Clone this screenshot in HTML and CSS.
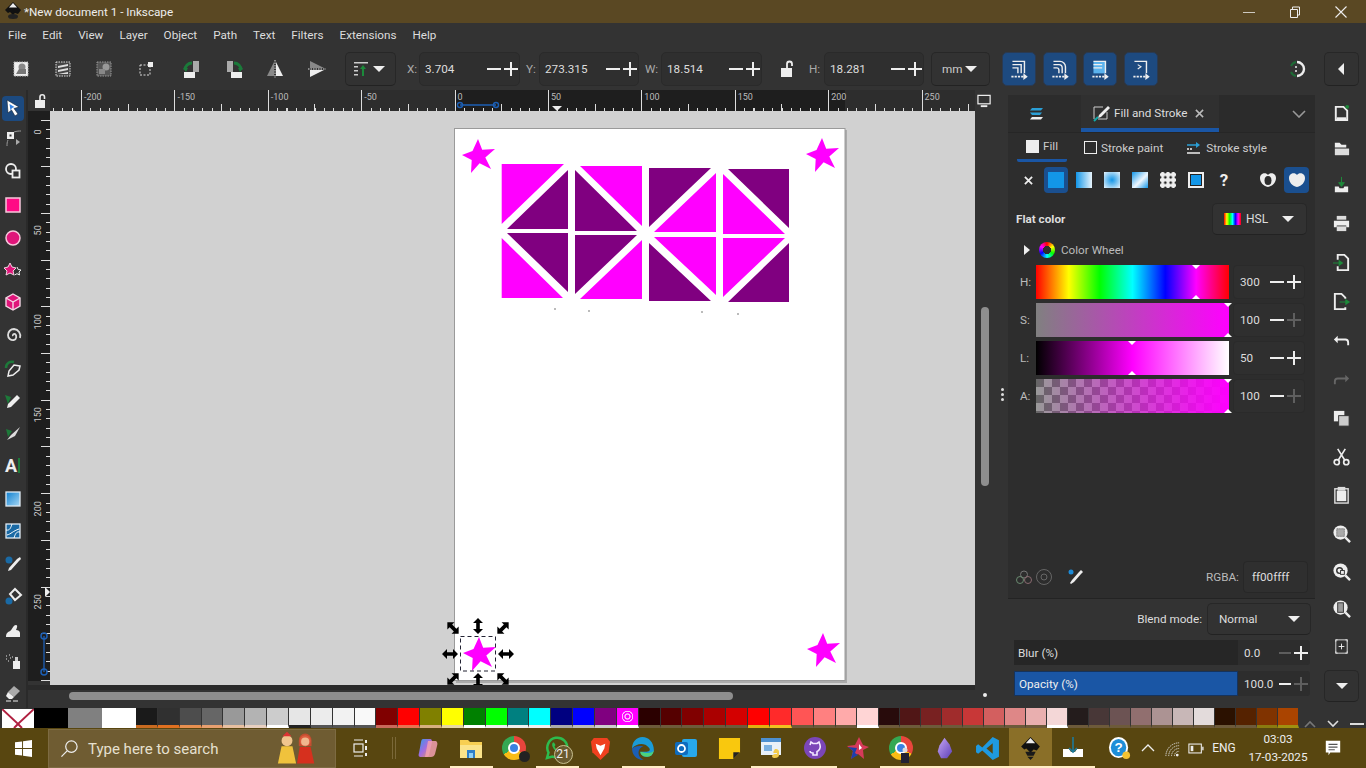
FILE: index.html
```html
<!DOCTYPE html>
<html lang="en">
<head>
<meta charset="utf-8">
<title>*New document 1 - Inkscape</title>
<link rel="stylesheet" href="styles.css">
</head>
<body>
<header class="title">
  <svg class="logo" viewBox="0 0 20 20" width="20" height="20"><path d="M10 1 2 9l3 3 2-1 3 3 2-2 3 1 3-4z" fill="#111"/><path d="M10 2 6 6.500h8z" fill="#eee"/><ellipse cx="10" cy="15.500" rx="5" ry="2.500" fill="#222"/></svg>
  <span class="title-text">*New document 1 - Inkscape</span>
  <div class="win">
    <svg viewBox="0 0 46 16" width="12" height="16"><rect x="0" y="8" width="46" height="3" fill="#eee"/></svg>
    <svg viewBox="0 0 12 12" width="12" height="12"><path d="M1.500 3.500h7v8h-7zM3.500 3.500v-2.500h7v8h-2" fill="none" stroke="#eee"/></svg>
    <svg viewBox="0 0 12 12" width="12" height="12"><path d="M.5.500l11 11M11.500.500l-11 11" stroke="#eee" stroke-width="1.100"/></svg>
  </div>
</header>

<nav class="menu">
  <span>File</span><span>Edit</span><span>View</span><span>Layer</span><span>Object</span><span>Path</span><span>Text</span><span>Filters</span><span>Extensions</span><span>Help</span>
</nav>

<div class="toolbar">
  <div class="ticons">
    <svg viewBox="0 0 24 24"><rect x="5" y="5" width="14" height="14" fill="#eee" stroke="#bbb" stroke-dasharray="1.500 1"/><circle cx="13" cy="10" r="3.500" fill="#888"/><path d="M7 17l3-5h7v5z" fill="#777"/></svg>
    <svg viewBox="0 0 24 24"><rect x="5" y="5" width="14" height="14" fill="#444" stroke="#ddd" stroke-dasharray="1.500 1"/><path d="M7 9l10-2v2L7 11zM7 13l10-2v2L7 15zM7 17l10-2v2H7z" fill="#ddd"/></svg>
    <svg viewBox="0 0 24 24"><rect x="5" y="5" width="14" height="14" fill="#555" stroke="#999" stroke-dasharray="1.500 1"/><circle cx="14" cy="10" r="3.500" fill="#999"/><rect x="7" y="12" width="6" height="5" fill="#888"/></svg>
    <svg viewBox="0 0 24 24"><rect x="6" y="8" width="10" height="10" fill="none" stroke="#ddd" stroke-dasharray="2 1.500"/><rect x="14" y="5" width="5" height="5" fill="#eee"/></svg>
    <svg viewBox="0 0 24 24" class="sep"><rect x="13" y="4" width="6" height="11" fill="#aaa"/><rect x="4" y="15" width="11" height="6" fill="#eee"/><path d="M5 13a7 7 0 0 1 7-7" fill="none" stroke="#1b7a3a" stroke-width="3"/><path d="M3 11l5 0-2 4z" fill="#1b7a3a"/></svg>
    <svg viewBox="0 0 24 24"><rect x="5" y="4" width="6" height="11" fill="#aaa"/><rect x="9" y="15" width="11" height="6" fill="#eee"/><path d="M19 13a7 7 0 0 0-7-7" fill="none" stroke="#1b7a3a" stroke-width="3"/><path d="M21 11h-5l2 4z" fill="#1b7a3a"/></svg>
    <svg viewBox="0 0 24 24"><path d="M11 5v14H4z" fill="#888"/><path d="M13 5v14h7z" fill="#eee"/><path d="M12 3v18" stroke="#ddd" stroke-dasharray="1.500 1"/></svg>
    <svg viewBox="0 0 24 24"><path d="M5 11h14L5 4z" fill="#888"/><path d="M5 13h14L5 20z" fill="#eee"/><path d="M3 12h18" stroke="#ddd" stroke-dasharray="1.500 1"/></svg>
  </div>
  <div class="btn align">
    <svg viewBox="0 0 18 18" width="18" height="18"><path d="M1 2h14v1.500H1zM1 6h4v1.500H1zM1 10h4v1.500H1zM1 14h4v1.500H1z" fill="#ccc"/><path d="M10 5l3 4h-2v7H9V9H7z" fill="#1b8a3a"/></svg>
    <i class="caret"></i>
  </div>
  <label class="flabel fx">X:</label>
  <div class="field fw1"><span>3.704</span><i class="minus"></i><i class="plus"></i></div>
  <label class="flabel fy">Y:</label>
  <div class="field fw2"><span>273.315</span><i class="minus"></i><i class="plus"></i></div>
  <label class="flabel fw">W:</label>
  <div class="field fw1"><span>18.514</span><i class="minus"></i><i class="plus"></i></div>
  <svg class="lock" viewBox="0 0 14 18" width="14" height="18"><rect x="1" y="8" width="11" height="9" fill="#eee"/><path d="M7 8V4a2.500 2.500 0 0 1 5 0v2" fill="none" stroke="#eee" stroke-width="1.800"/></svg>
  <label class="flabel fh">H:</label>
  <div class="field fw2"><span>18.281</span><i class="minus"></i><i class="plus"></i></div>
  <div class="btn unit"><span>mm</span><i class="caret"></i></div>
  <div class="snaps">
    <div class="bluebtn"><svg viewBox="0 0 22 22"><path d="M5 4h11v11M5 7h8v8M5 10h5v5" fill="none" stroke="#eee" stroke-width="1.300"/><path d="M4 18h11" stroke="#eee" stroke-dasharray="2 1" stroke-width="1.500"/><path d="M15 15l4 3-4 3z" fill="#eee"/></svg></div>
    <div class="bluebtn"><svg viewBox="0 0 22 22"><path d="M5 4h6a5 5 0 0 1 5 5v6M5 7h5a3 3 0 0 1 3 3v5M5 10h3a2 2 0 0 1 2 2v3" fill="none" stroke="#eee" stroke-width="1.300"/><path d="M4 18h11" stroke="#eee" stroke-dasharray="2 1" stroke-width="1.500"/><path d="M15 15l4 3-4 3z" fill="#eee"/></svg></div>
    <div class="bluebtn"><svg viewBox="0 0 22 22"><rect x="5" y="4" width="11" height="11" fill="#5bb3ee"/><path d="M5 4h11v11M5 7h8M5 10h8" fill="none" stroke="#eee" stroke-width="1.300"/><path d="M4 18h11" stroke="#eee" stroke-dasharray="2 1" stroke-width="1.500"/><path d="M15 15l4 3-4 3z" fill="#eee"/></svg></div>
    <div class="bluebtn"><svg viewBox="0 0 22 22"><path d="M5 4h11v11" fill="none" stroke="#eee" stroke-width="1.300"/><path d="M8 7l3 2-3 2" fill="none" stroke="#eee"/><path d="M4 18h11" stroke="#eee" stroke-dasharray="2 1" stroke-width="1.500"/><path d="M15 15l4 3-4 3z" fill="#eee"/></svg></div>
  </div>
  <svg class="snapmain" viewBox="0 0 22 22" width="22" height="22"><path d="M9 4a7 7 0 0 1 0 14" fill="none" stroke="#eee" stroke-width="2.400"/><path d="M8 4a7 7 0 0 0-5 4M3 14a7 7 0 0 0 5 4" fill="none" stroke="#1d6b35" stroke-width="2"/><path d="M7 9h2M7 13h2" stroke="#eee" stroke-width="1.500"/></svg>
  <div class="btn more"><i class="caret-left"></i></div>
</div>

<main class="main">
  <aside class="tools">
    <div class="tool on"><svg viewBox="0 0 20 20"><path d="M4 2l12 7-5 1.500 4 5.500-3 2-3.500-6L5 15z" fill="#fff" stroke="#123" stroke-width=".6"/><path d="M6.500 6l5 3-2.500 1-1.500 2.500z" fill="#3584e4"/></svg></div>
    <div class="tool"><svg viewBox="0 0 20 20"><rect x="4" y="4" width="7" height="7" fill="#eee"/><rect x="6.500" y="6.500" width="2" height="2" fill="#333"/><path d="M13 11l4 3-4 3z" fill="#aaa"/><path d="M11 4c3-1 5-1 7-1M5 12c-1 2-1 4-1 6" stroke="#999" fill="none"/></svg></div>
    <div class="tool"><svg viewBox="0 0 20 20"><circle cx="8" cy="8" r="5" fill="none" stroke="#eee" stroke-width="1.800"/><rect x="9.500" y="9.500" width="7" height="7" fill="#333" stroke="#eee" stroke-width="1.800"/></svg></div>
    <div class="tool"><svg viewBox="0 0 20 20"><rect x="3" y="3" width="14" height="14" fill="#ff0a85" stroke="#f7c8dc" stroke-width="1.500"/></svg></div>
    <div class="tool"><svg viewBox="0 0 20 20"><circle cx="10" cy="10" r="7" fill="#e0157a" stroke="#f7c8dc" stroke-width="1.500"/></svg></div>
    <div class="tool"><svg viewBox="0 0 20 20"><path d="M7 3l2 4 4 1-3 3 1 4-4-2-4 2 1-4-3-3 4-1z" fill="#e0157a" stroke="#f3d5e3"/><path d="M14 7l1.200 2.500 2.800.5-2 2 .5 3-2.500-1.300-2.500 1.300" fill="#333" stroke="#eee"/></svg></div>
    <div class="tool"><svg viewBox="0 0 20 20"><path d="M10 2l7 4v8l-7 4-7-4V6z" fill="#e0157a" stroke="#f3d5e3" stroke-width="1.400"/><path d="M3 6l7 4 7-4M10 10v8" stroke="#f3d5e3" stroke-width="1.400" fill="none"/></svg></div>
    <div class="tool"><svg viewBox="0 0 20 20"><path d="M10 11a1.500 1.500 0 0 1 2-2 3.500 3.500 0 0 1-1 6 5 5 0 0 1-6-5 6 6 0 0 1 6-6 7 7 0 0 1 6 9" fill="none" stroke="#ddd" stroke-width="1.800"/></svg></div>
    <div class="tool"><svg viewBox="0 0 20 20"><path d="M3 10c0-5 4-7 8-6" fill="none" stroke="#1d7a3a" stroke-width="2.500"/><path d="M17 8l-6-1-5 6-1 5 5-1 6-5z" fill="#333" stroke="#eee" stroke-width="1.500"/></svg></div>
    <div class="tool"><svg viewBox="0 0 20 20"><path d="M2 4l6 2-3 7z" fill="#1d7a3a"/><path d="M4 17l1-4 9-9 3 3-9 9z" fill="#eee"/></svg></div>
    <div class="tool"><svg viewBox="0 0 20 20"><path d="M3 6l6 2-4 6z" fill="#1d7a3a"/><path d="M4 17l4-5 9-8-5 9z" fill="#ddd"/></svg></div>
    <div class="tool"><span class="tool-a">A</span><i class="tool-bar"></i></div>
    <div class="tool"><svg viewBox="0 0 20 20"><defs><linearGradient id="gtool" x1="0" y1="0" x2="1" y2="1"><stop offset="0" stop-color="#0d7fd0"/><stop offset="1" stop-color="#a8d8f5"/></linearGradient></defs><rect x="3" y="3" width="14" height="14" fill="url(#gtool)" stroke="#dfeaf3" stroke-width="1.300"/></svg></div>
    <div class="tool"><svg viewBox="0 0 20 20"><rect x="3" y="3" width="14" height="14" fill="#1a6aa5" stroke="#dfeaf3" stroke-width="1.300"/><path d="M3 9c4 1 5-3 6-6M17 11c-4-1-5 3-6 6M4 14c4-1 6-4 12-6" stroke="#fff" fill="none"/></svg></div>
    <div class="tool"><svg viewBox="0 0 20 20"><circle cx="6" cy="6" r="3.500" fill="#1a6aa5"/><path d="M17 3l1 2-2 2-8 9-3 1 1-3 8-9z" fill="#eee"/></svg></div>
    <div class="tool"><svg viewBox="0 0 20 20"><path d="M12 3l6 6-6 5-5-6z" fill="#333" stroke="#eee" stroke-width="2"/><circle cx="6" cy="15" r="3.500" fill="#1a6aa5"/></svg></div>
    <div class="tool"><svg viewBox="0 0 20 20"><path d="M3 17c0-4 2-5 4-6 2-1 3-6 6-6 2 0 1 3 0 5 2 0 4 1 4 3v4z" fill="#eee"/></svg></div>
    <div class="tool"><svg viewBox="0 0 20 20"><path d="M10 9h7v8h-7z" fill="#eee"/><rect x="12" y="5" width="3" height="4" fill="#ccc"/><path d="M3 4h1M6 3h1M3 7h1M7 6h1M5 9h1M9 5h1" stroke="#aaa" stroke-width="1.500"/></svg></div>
    <div class="tool"><svg viewBox="0 0 20 20"><path d="M11 3l6 5-6 6-6-5z" fill="#aaa"/><path d="M5 9l6 5-2 2H6l-3-3z" fill="#eee"/><path d="M3 18h14" stroke="#eee" stroke-dasharray="5 2"/></svg></div>
  </aside>

  <section class="work">
    <div class="corner"><svg viewBox="0 0 14 16" width="14" height="16"><rect x="1" y="7" width="10" height="8" fill="#eee"/><path d="M6 7V4a2.200 2.200 0 0 1 4.500 0v2" fill="none" stroke="#eee" stroke-width="1.600"/></svg></div>
    <div class="hruler">
      <span>-200</span><span>-150</span><span>-100</span><span>-50</span><span>0</span><span>50</span><span>100</span><span>150</span><span>200</span><span>250</span>
      <svg class="hmark" viewBox="0 0 48 10"><path d="M5 5h36" stroke="#1c5fb5" stroke-width="1.500"/><circle cx="5" cy="5" r="2.500" fill="none" stroke="#1c5fb5" stroke-width="1.400"/><circle cx="41" cy="5" r="2.500" fill="none" stroke="#1c5fb5" stroke-width="1.400"/></svg>
      <i class="hptr"></i>
    </div>
    <div class="rulercorner"><svg viewBox="0 0 16 14" width="15" height="14"><rect x="1" y="1" width="13" height="9" fill="none" stroke="#eee" stroke-width="1.300"/><path d="M4 12.500h7" stroke="#eee" stroke-width="2"/></svg></div>
    <div class="vruler">
      <span>0</span><span>50</span><span>100</span><span>150</span><span>200</span><span>250</span>
      <svg class="vmark" viewBox="0 0 10 48"><path d="M5 5v36" stroke="#1c5fb5" stroke-width="1.300"/><circle cx="5" cy="5" r="3" fill="none" stroke="#1c5fb5" stroke-width="1.500"/><circle cx="5" cy="41" r="3" fill="none" stroke="#1c5fb5" stroke-width="1.500"/></svg>
      <i class="vptr"></i>
    </div>
    <div class="canvas">
      <svg viewBox="50 111 925 574" width="925" height="574">
        <defs>
          <polygon id="star" points="0,-17 4.200,-6.200 17,-7 7.300,1.500 13,13 1.600,7.300 -7,17 -6.300,4.100 -16,-1 -5.500,-5.100" fill="#ff00ff"/>
          <path id="dbl" d="M-8 0-3-5V-1.800H3V-5L8 0 3 5V1.800H-3V5Z" fill="#000"/>
        </defs>
        <rect x="456" y="130" width="391" height="553" fill="#aaa"/>
        <rect x="454.500" y="128.500" width="390.500" height="552" fill="#fff" stroke="#9a9a9a"/>
        <use href="#star" x="478" y="156"/><use href="#star" x="822" y="155"/><use href="#star" x="823" y="650"/>
        <g fill="#ff00ff">
          <path d="M501.700 164H564L501.700 224ZM642 166H580L642 226ZM716 173V232H654ZM723 174V234H785Z"/>
          <path d="M501.700 238V298H563ZM642 240V299H580ZM654 237H716V295ZM723 238H785L723 297Z"/>
        </g>
        <g fill="#800080">
          <path d="M568 170V229H507ZM575 170V231H637ZM649 168H711L649 227ZM728 169H789V228Z"/>
          <path d="M507 233H568V292ZM575 235H637L575 294ZM649 243V301H711ZM789 243V302H728Z"/>
        </g>
        <g fill="#bbb"><rect x="554" y="308" width="2" height="2"/><rect x="588" y="310" width="2" height="2"/><rect x="701" y="311" width="2" height="2"/><rect x="737" y="313" width="2" height="2"/></g>
        <use href="#star" x="479" y="654"/>
        <rect x="460.500" y="636.500" width="35" height="34.500" fill="none" stroke="#223" stroke-dasharray="4 3"/>
        <use href="#dbl" transform="translate(450 654)"/><use href="#dbl" transform="translate(506 654)"/>
        <use href="#dbl" transform="translate(478 626) rotate(90)"/><use href="#dbl" transform="translate(478 681) rotate(90)"/>
        <use href="#dbl" transform="translate(453 628) rotate(45)"/><use href="#dbl" transform="translate(503 628) rotate(-45)"/>
        <use href="#dbl" transform="translate(453 679) rotate(-45)"/><use href="#dbl" transform="translate(503 679) rotate(45)"/>
      </svg>
    </div>
    <div class="vscroll"><i></i></div>
    <div class="hscroll"><i></i></div>
    <div class="scorner"><i></i></div>
  </section>

  <div class="handle"><i></i><i></i><i></i></div>

  <section class="panel">
    <div class="tabs">
      <div class="tab-first"><svg viewBox="0 0 20 16" width="20" height="16"><path d="M5 2h11l-2 2.500H3z" fill="#2a9fd6"/><path d="M3 6.500h12l-2 2.500H5z" fill="#2a9fd6"/><path d="M5 11h11l-2 2.500H3z" fill="#eee"/></svg></div>
      <div class="tab-active">
        <svg viewBox="0 0 18 18" width="18" height="18"><path d="M2 15V3h9M15 8v7H6" fill="none" stroke="#ccc"/><path d="M16 2 7 11l-1 3 3-1 9-9z" fill="#eee"/><path d="M6 13 2 17" stroke="#1aa" stroke-width="2"/></svg>
        <span>Fill and Stroke</span>
        <svg viewBox="0 0 10 10" width="9" height="9"><path d="M1 1l8 8M9 1l-8 8" stroke="#bbb" stroke-width="1.700"/></svg>
      </div>
      <div class="tab-menu"><svg viewBox="0 0 14 8" width="14" height="8"><path d="M1 1l6 6 6-6" fill="none" stroke="#999" stroke-width="1.600"/></svg></div>
    </div>
    <div class="fill-panel">
      <div class="subtabs">
        <div class="subtab current"><i class="sq filled"></i><span>Fill</span></div>
        <div class="subtab"><i class="sq"></i><span>Stroke paint</span></div>
        <div class="subtab"><svg viewBox="0 0 16 14" width="16" height="14"><path d="M1 4h9" stroke="#2a9fd6" stroke-width="1.500"/><path d="M10 1l4 3-4 3z" fill="#2a9fd6"/><path d="M1 8h5" stroke="#eee" stroke-dasharray="2 1" stroke-width="1.500"/><path d="M1 12h13" stroke="#eee" stroke-width="1.500"/></svg><span>Stroke style</span></div>
      </div>
      <div class="paints">
        <div class="paint"><svg viewBox="0 0 10 10" width="9" height="9"><path d="M1 1l8 8M9 1l-8 8" stroke="#eee" stroke-width="2"/></svg></div>
        <div class="paint sel"><i class="swatch flat"></i></div>
        <div class="paint"><i class="swatch lin"></i></div>
        <div class="paint"><i class="swatch rad"></i></div>
        <div class="paint"><i class="swatch mesh"></i></div>
        <div class="paint"><i class="swatch pat"></i></div>
        <div class="paint"><i class="swatch sw"></i></div>
        <div class="paint q">?</div>
        <div class="paint rule r1"><svg viewBox="0 0 18 16" width="18" height="16"><path d="M9 3C7 0 1 1 1 6c0 4 3 8 8 9 5-1 8-5 8-9 0-5-6-6-8-3z" fill="#eee"/><ellipse cx="9" cy="8.500" rx="3.500" ry="4.500" fill="#2d2d2d"/></svg></div>
        <div class="paint rule sel"><svg viewBox="0 0 18 16" width="18" height="16"><path d="M9 3C7 0 1 1 1 6c0 4 3 8 8 9 5-1 8-5 8-9 0-5-6-6-8-3z" fill="#eee"/></svg></div>
      </div>
      <div class="flatrow">
        <span class="flat-label">Flat color</span>
        <div class="btn hsl"><i class="rainbow"></i><span>HSL</span><i class="caret"></i></div>
      </div>
      <div class="wheelrow"><i class="tri"></i><i class="wheel"></i><span>Color Wheel</span></div>
      <div class="sl"><label>H:</label><div class="track hue"><i class="mk top mh"></i><i class="mk bot mh"></i></div><div class="sfield"><span>300</span><i class="minus"></i><i class="plus"></i></div></div>
      <div class="sl"><label>S:</label><div class="track sat"><i class="mk top mend"></i><i class="mk bot mend"></i></div><div class="sfield"><span>100</span><i class="minus"></i><i class="plus dim"></i></div></div>
      <div class="sl"><label>L:</label><div class="track lig"><i class="mk top ml"></i><i class="mk bot ml"></i></div><div class="sfield"><span>50</span><i class="minus"></i><i class="plus"></i></div></div>
      <div class="sl"><label>A:</label><div class="track alp"><i class="mk top mend"></i><i class="mk bot mend"></i></div><div class="sfield"><span>100</span><i class="minus"></i><i class="plus dim"></i></div></div>
      <div class="colorfoot">
        <svg viewBox="0 0 18 16" width="18" height="16"><g fill="none" stroke-width="1"><circle cx="9" cy="5.500" r="3.500" stroke="#777"/><circle cx="5" cy="11" r="3.500" stroke="#6a8a70"/><circle cx="13" cy="11" r="3.500" stroke="#8a6a70"/></g></svg>
        <svg class="cf2" viewBox="0 0 18 18" width="18" height="18"><circle cx="9" cy="9" r="7.500" fill="none" stroke="#666"/><circle cx="9" cy="9" r="3" fill="none" stroke="#666"/></svg>
        <svg class="cf3" viewBox="0 0 18 18" width="18" height="18"><circle cx="5" cy="4" r="2.500" fill="#1c8ad6"/><path d="M15 2l2 2-2 2-7 8-3 2-1-1 2-3 7-8z" fill="#eee"/></svg>
        <label class="rgba-l">RGBA:</label>
        <div class="rgba">ff00ffff</div>
      </div>
    </div>
    <div class="blend"><label>Blend mode:</label><div class="btn normal"><span>Normal</span><i class="caret"></i></div></div>
    <div class="bar"><div class="track-b"><span>Blur (%)</span></div><b>0.0</b><i class="minus dim"></i><i class="plus"></i></div>
    <div class="bar"><div class="track-b blue"><span>Opacity (%)</span></div><b>100.0</b><i class="minus"></i><i class="plus dim"></i></div>
  </section>

  <aside class="cmds">
    <div class="cmd"><svg viewBox="0 0 20 20"><path d="M4 3h8l4 4v10H4z" fill="none" stroke="#eee" stroke-width="2"/><rect x="5" y="14" width="10" height="3" fill="#eee"/><circle cx="16" cy="3" r="2" fill="#1d8a3a"/></svg></div>
    <div class="cmd"><svg viewBox="0 0 20 20"><path d="M3 3h5l2 2h5v3H3z" fill="#eee"/><path d="M3 9h15v7H3z" fill="#ddd"/></svg></div>
    <div class="cmd"><svg viewBox="0 0 20 20"><path d="M10 1v6h3l-3 4-3-4h3z" fill="#1d8a3a" stroke="#1d8a3a"/><path d="M3 11h4l1 2h4l1-2h4v6H3z" fill="#eee"/></svg></div>
    <div class="cmd"><svg viewBox="0 0 20 20"><path d="M5 2h10v4H5z" fill="#ddd"/><path d="M2 7h16v7h-3v-2H5v2H2z" fill="#eee"/><rect x="5" y="13" width="10" height="5" fill="#ddd"/></svg></div>
    <div class="cmd"><svg viewBox="0 0 20 20"><path d="M6 7V2h7l4 4v12H6v-4" fill="none" stroke="#eee" stroke-width="2"/><path d="M1 10h6V7l5 3.500L7 14v-3H1z" fill="#1d8a3a"/></svg></div>
    <div class="cmd"><svg viewBox="0 0 20 20"><path d="M14 7V6l-4-4H3v16h11v-2" fill="none" stroke="#eee" stroke-width="2"/><path d="M8 10h6V7l5 3.500-5 3.500v-3H8z" fill="#1d8a3a"/></svg></div>
    <div class="cmd"><svg viewBox="0 0 20 20"><path d="M6 5 2 9l4 4V10h8a2 2 0 0 1 2 2v3h2v-3a4 4 0 0 0-4-4H6z" fill="#eee"/></svg></div>
    <div class="cmd"><svg viewBox="0 0 20 20"><path d="M14 5l4 4-4 4V10H6a2 2 0 0 0-2 2v3H2v-3a4 4 0 0 1 4-4h8z" fill="#666"/></svg></div>
    <div class="cmd"><svg viewBox="0 0 20 20"><rect x="2" y="2" width="11" height="11" fill="#eee"/><rect x="7" y="7" width="11" height="11" fill="#ccc" stroke="#333"/></svg></div>
    <div class="cmd"><svg viewBox="0 0 20 20"><circle cx="5" cy="16" r="2.700" fill="none" stroke="#eee" stroke-width="1.800"/><circle cx="15" cy="16" r="2.700" fill="none" stroke="#eee" stroke-width="1.800"/><path d="M6.500 14 14 2M13.500 14 6 2" stroke="#eee" stroke-width="1.700"/></svg></div>
    <div class="cmd"><svg viewBox="0 0 20 20"><rect x="3" y="4" width="14" height="15" fill="none" stroke="#ddd" stroke-width="1.500"/><rect x="6" y="2" width="8" height="4" fill="#ddd"/><rect x="5" y="6" width="10" height="11" fill="#eee"/></svg></div>
    <div class="cmd"><svg viewBox="0 0 20 20"><circle cx="9" cy="9" r="7.500" fill="#eee"/><rect x="5" y="5" width="8" height="8" fill="#aaa" stroke="#555" stroke-dasharray="1 1"/><path d="M14 14l5 5" stroke="#eee" stroke-width="2.500"/></svg></div>
    <div class="cmd"><svg viewBox="0 0 20 20"><circle cx="9" cy="9" r="7.500" fill="#eee"/><circle cx="8" cy="9" r="3" fill="none" stroke="#333" stroke-width="1.500"/><rect x="9" y="9" width="4" height="4" fill="#eee" stroke="#333"/><path d="M14 14l5 5" stroke="#eee" stroke-width="2.500"/></svg></div>
    <div class="cmd"><svg viewBox="0 0 20 20"><circle cx="9" cy="9" r="7.500" fill="#eee"/><rect x="6" y="4" width="6" height="10" fill="#999" stroke="#333"/><path d="M14 14l5 5" stroke="#eee" stroke-width="2.500"/></svg></div>
    <div class="cmd"><svg viewBox="0 0 20 20"><path d="M4 5V3h2M14 3h2v2M16 15v2h-2M6 17H4v-2" fill="none" stroke="#ddd"/><rect x="4" y="3" width="12" height="14" fill="none" stroke="#ddd" stroke-width="1"/><path d="M10 7v6M7 10h6" stroke="#eee"/></svg></div>
    <div class="cmd"><div class="btn cmore"><i class="caret"></i></div></div>
  </aside>
</main>

<div class="palette">
  <div class="none"><svg viewBox="0 0 32 19" preserveAspectRatio="none" width="32" height="19"><path d="M0 0 16 15 32 0M16 15 12 19M16 15l4 4" fill="none" stroke="#b02040" stroke-width="2"/></svg></div>
  <i class="c big c000"></i><i class="c big c808"></i><i class="c big cfff"></i>
  <div class="pgroup g1">
    <i class="c g01"></i><i class="c g02"></i><i class="c g03"></i><i class="c g04"></i><i class="c g05"></i><i class="c g06"></i><i class="c g07"></i><i class="c g08"></i><i class="c g09"></i><i class="c g10"></i><i class="c g11"></i>
    <i class="c b01"></i><i class="c b02"></i><i class="c b03"></i><i class="c b04"></i><i class="c b05"></i><i class="c b06"></i><i class="c b07"></i><i class="c b08"></i><i class="c b09"></i><i class="c b10"></i><i class="c b11"></i><i class="c b12"></i>
    <i class="c r01"></i><i class="c r02"></i><i class="c r03"></i><i class="c r04"></i><i class="c r05"></i><i class="c r06"></i><i class="c r07"></i><i class="c r08"></i><i class="c r09"></i><i class="c r10"></i><i class="c r11"></i>
  </div>
  <div class="pgroup g2">
    <i class="c p01"></i><i class="c p02"></i><i class="c p03"></i><i class="c p04"></i><i class="c p05"></i><i class="c p06"></i><i class="c p07"></i><i class="c p08"></i><i class="c p09"></i>
    <i class="c m01"></i><i class="c m02"></i><i class="c m03"></i><i class="c m04"></i><i class="c m05"></i><i class="c m06"></i><i class="c m07"></i>
    <i class="c o01"></i><i class="c o02"></i><i class="c o03"></i><i class="c o04"></i>
  </div>
  <div class="pctrl">
    <svg viewBox="0 0 12 8" width="12" height="8"><path d="M1 7l5-5 5 5" fill="none" stroke="#777" stroke-width="1.600"/></svg>
    <svg viewBox="0 0 12 8" width="12" height="8"><path d="M1 1l5 5 5-5" fill="none" stroke="#ddd" stroke-width="1.600"/></svg>
    <svg viewBox="0 0 14 8" width="14" height="8"><path d="M0 4h14" stroke="#ddd" stroke-width="2"/></svg>
  </div>
</div>

<footer class="taskbar">
  <div class="start"><svg viewBox="0 0 18 18" width="17" height="17"><path d="M0 2.500 7.500 1.500V8.500H0ZM8.500 1.300 18 0V8.500H8.500ZM0 9.500H7.500V16.500L0 15.500ZM8.500 9.500H18V18L8.500 16.700Z" fill="#fff"/></svg></div>
  <div class="search">
    <svg viewBox="0 0 20 20" width="19" height="19"><circle cx="12" cy="8" r="6" fill="none" stroke="#eee" stroke-width="1.300"/><path d="M7.500 12.500 1.500 18.500" stroke="#eee" stroke-width="1.300"/></svg>
    <span>Type here to search</span>
    <svg class="dolls" viewBox="0 0 44 40" width="40" height="38"><circle cx="11" cy="12" r="6" fill="#f0c58e"/><path d="M6 7l5-5 5 5z" fill="#d33"/><path d="M5 18h12l4 19H1z" fill="#f0c23c"/><circle cx="31" cy="12" r="6" fill="#e8a878"/><path d="M24 12a7 8 0 0 1 14 0v6H24z" fill="#d84a30" opacity=".8"/><circle cx="31" cy="13" r="4.500" fill="#f0b88e"/><path d="M25 19h12l4 18H22z" fill="#d6301e"/></svg>
  </div>
  <div class="ti taskview"><svg viewBox="0 0 18 18" width="18" height="18"><path d="M3 1h9M3 17h9" stroke="#eee" stroke-width="1.200"/><rect x="3" y="5" width="9" height="8" fill="none" stroke="#eee" stroke-width="1.200"/><path d="M15 1v3M15 7v4M15 14v3" stroke="#eee" stroke-width="2"/></svg></div>
  <div class="tdiv"><i></i><i></i></div>
  <div class="ti"><svg viewBox="0 0 24 24" width="24" height="24"><defs><linearGradient id="cop" x1="0" y1="0" x2="1" y2="1"><stop offset="0" stop-color="#2f9be8"/><stop offset=".5" stop-color="#a56be0"/><stop offset="1" stop-color="#f0a040"/></linearGradient></defs><path d="M7 3h7c2 0 2 2 2 3l-3 13c-.5 2-2 2-3 2H5c-2 0-3-1-2-4L5 6c.4-2 1-3 2-3z" fill="url(#cop)"/><path d="M12 5h7c2 0 3 2 2 5l-2 8c-.6 2-2 3-4 3h-6z" fill="#f3a0b0" opacity=".85"/></svg></div>
  <div class="ti run"><svg viewBox="0 0 24 24" width="24" height="24"><path d="M1 4h8l2 2h12v16H1z" fill="#f7cf52"/><path d="M1 9h22v13H1z" fill="#fbe48a"/><path d="M8 14h8v8H8z" fill="#2e7fc8"/><rect x="10" y="17" width="4" height="5" fill="#8fd0f5"/></svg></div>
  <div class="ti"><i class="chrome"><i></i></i><i class="chrome-badge"></i></div>
  <div class="ti run"><svg viewBox="0 0 26 26" width="26" height="26"><path d="M3 23l1.500-5.500A10 10 0 1 1 8.500 21.500z" fill="none" stroke="#2dbb4e" stroke-width="2.500"/><path d="M9 7.500c-2 2 0 6 2.500 8s5 3 6.500 1l-2.500-2.500-1.500 1c-1.500-.5-3-2-3.500-3.500l1-1.500L10 7.500z" fill="#2dbb4e"/></svg><span class="wabadge">21</span></div>
  <div class="ti"><svg viewBox="0 0 22 26" width="21" height="25"><path d="M4 2h14l3 4-1.500 11L11 25 2.500 17 1 6z" fill="#f0401f"/><path d="M6 8l5 2 5-2-1 5-4 7-4-7z" fill="#fff"/></svg></div>
  <div class="ti run"><svg viewBox="0 0 24 24" width="25" height="25"><path d="M22 14C22 6 17 1 11 1 5 1 1 6 1 12c4-5 12-6 16-1 2 2 1 4-2 4H9c0 3 3 5 7 5 3 0 5-2 6-6z" fill="#1a9bd7"/><path d="M1 12c0 6 4 11 11 11-4-2-6-6-4-10 1-2 3-3 4-3-5-1-9 0-11 2z" fill="#1b5fb5"/><path d="M9 15c0 3 3 5 7 5 3 0 5-2 6-6-2 3-7 3-13 1z" fill="#4dd27a"/></svg></div>
  <div class="ti"><svg viewBox="0 0 24 24" width="24" height="24"><rect x="8" y="3" width="15" height="18" rx="2" fill="#28a8ea"/><rect x="1" y="6" width="13" height="13" rx="2" fill="#0f6cbd"/><circle cx="7.500" cy="12.500" r="3.500" fill="none" stroke="#fff" stroke-width="1.800"/></svg></div>
  <div class="ti"><svg viewBox="0 0 24 24" width="23" height="23"><path d="M1 1h22v15l-7 7H1z" fill="#f9c80e"/><path d="M23 16l-7 7v-7z" fill="#222"/></svg></div>
  <div class="ti run"><svg viewBox="0 0 24 24" width="24" height="24"><rect x="1" y="2" width="20" height="17" fill="#e8f0f8"/><rect x="1" y="2" width="20" height="4" fill="#4d90d0"/><rect x="4" y="9" width="8" height="6" fill="#7ab0e0"/><path d="M15 13c4 0 4 2 4 3v3c0 3-4 3-5 3s-2-1-2-2 2-2 3-2h2v-1h-3c-1 0-1-1 1-4z" fill="#f2cb4c"/></svg></div>
  <div class="ti run"><svg viewBox="0 0 24 24" width="24" height="24"><circle cx="12" cy="12" r="11" fill="#7b46b8"/><path d="M7 9l1-3 2 1.500h4L16 6l1 3c1 3-1 6-3 6.500v3.500h-4v-2c-2 0-3-1-3-2" fill="none" stroke="#f2e8ff" stroke-width="1.600"/></svg></div>
  <div class="ti"><svg viewBox="0 0 24 24" width="24" height="24"><path d="M13 1l4 8 6 2-6 3 1 9-6-5-7 5 2-8-6-5 8-1z" fill="#d63a5a"/><path d="M2 11l9 1-2 5 3 2-7 4 2-8z" fill="#1e3fa8"/><path d="M13 8l3 4-3 2z" fill="#fff"/></svg></div>
  <div class="ti run"><i class="chrome"><i></i></i><svg class="cdoll" viewBox="0 0 10 16" width="10" height="16"><circle cx="5" cy="3" r="2.500" fill="#ddd"/><path d="M1 6h8v10H1z" fill="#223"/></svg></div>
  <div class="ti run"><svg viewBox="0 0 20 26" width="17" height="24"><defs><linearGradient id="obs" x1="0" y1="0" x2="1" y2="1"><stop offset="0" stop-color="#c9a8f5"/><stop offset="1" stop-color="#5c3fb8"/></linearGradient></defs><path d="M10 1l6 8 3 8-6 8H6L2 17l2-7z" fill="url(#obs)"/></svg></div>
  <div class="ti run"><svg viewBox="0 0 24 24" width="25" height="25"><path d="M17 1l6 3v16l-6 3-10-9-4 3-2-1.500V9.500L3 8l4 3zM17 7l-6 5 6 5z" fill="#1f9ae0"/></svg></div>
  <div class="ti cur"><svg viewBox="0 0 24 24" width="25" height="25"><path d="M12 1 3 10l3 3 2-1 4 4 3-3 3 1 3-4z" fill="#111"/><path d="M12 2 7.500 7h9z" fill="#eee"/><path d="M7 15h10l-2 4h-6zM9 20h6l-3 3z" fill="#1a1a1a"/></svg></div>
  <div class="ti run"><svg viewBox="0 0 24 24" width="24" height="24"><path d="M2 13h6l2 3h4l2-3h6v8H2z" fill="#fff"/><path d="M12 1v15M8 12l4 4 4-4" fill="none" stroke="#1f7a9a" stroke-width="1.600"/></svg></div>
  <div class="help"><svg viewBox="0 0 24 26" width="23" height="25"><ellipse cx="11" cy="12" rx="10" ry="11" fill="#fff"/><ellipse cx="11" cy="12" rx="8" ry="9" fill="#1d8ed8"/><text x="11" y="17" text-anchor="middle" class="helpq">?</text><circle cx="19" cy="20" r="4" fill="#f2c230"/></svg></div>
  <div class="tray chev"><svg viewBox="0 0 14 8" width="14" height="8"><path d="M1 7l6-6 6 6" fill="none" stroke="#eee" stroke-width="1.300"/></svg></div>
  <div class="tray wifi"><svg viewBox="0 0 18 18" width="17" height="17"><path d="M2 17a14 14 0 0 1 14-14M5 17A11 11 0 0 1 16 6M8 17a8 8 0 0 1 8-8M11 17a5 5 0 0 1 5-5" fill="none" stroke="#ddd" stroke-dasharray="1.500 .8"/><circle cx="14" cy="16" r="1.500" fill="#eee"/></svg></div>
  <div class="tray batt"><svg viewBox="0 0 18 12" width="16" height="11"><rect x="1" y="1" width="14" height="10" fill="none" stroke="#eee" stroke-width="1.200"/><rect x="3" y="3" width="3" height="6" fill="#eee"/><rect x="16" y="4" width="1.500" height="4" fill="#eee"/></svg></div>
  <div class="lang">ENG</div>
  <div class="clock"><span>03:03</span><span>17-03-2025</span></div>
  <div class="notif"><svg viewBox="0 0 20 20" width="18" height="18"><path d="M2 2h16v13H7l-2 3v-3H2z" fill="#fff"/><path d="M5 6h10M5 9h10M5 12h7" stroke="#555" stroke-width="1.200"/></svg></div>
</footer>
</body>
</html>
```

FILE: styles.css
```css
* { box-sizing: border-box; }
html, body { margin: 0; padding: 0; }
body {
  width: 1366px; height: 768px; overflow: hidden;
  display: flex; flex-direction: column;
  background: #333; color: #e4e4e4;
  font-family: Roboto, "Liberation Sans", sans-serif; font-size: 12px;
}
svg { display: block; flex: none; }
i { display: block; font-style: normal; }

.title { height: 23px; background: #5a4823; display: flex; align-items: center; padding-left: 3px; flex: none; }
.logo { margin-top: -2px; }
.title-text { margin-left: 1px; font-size: 11.700px; color: #eee; }
.win { margin-left: auto; display: flex; align-items: center; gap: 34px; padding-right: 19px; }

.menu { height: 26px; flex: none; display: flex; align-items: center; gap: 16px; padding: 0 0 2px 8px; font-size: 11.700px; color: #ddd; background: #333; }

.toolbar { height: 41px; flex: none; display: flex; align-items: center; padding-bottom: 1px; background: #333; }
.ticons { display: flex; gap: 17.500px; padding-left: 9px; width: 345px; flex: none; }
.ticons svg { width: 24px; height: 24px; }
.ticons .sep { margin-left: 5px; }
.btn { display: flex; align-items: center; flex: none; background: #323232; border: 1px solid #272727; border-bottom-color: #222; border-radius: 5px; }
.caret { width: 0; height: 0; border: 6px solid transparent; border-top: 6px solid #eee; border-bottom: 0; }
.caret-left { width: 0; height: 0; border: 6px solid transparent; border-right: 6px solid #eee; border-left: 0; }
.align { width: 51px; height: 34px; padding-left: 7px; gap: 2px; }
.flabel { color: #aaa; font-size: 11.700px; flex: none; }
.fx { margin-left: 11px; width: 12px; }
.fy { margin-left: 6px; width: 13px; }
.fw { margin-left: 6px; width: 16px; }
.fh { margin-left: 15px; width: 15px; }
.field { height: 34px; flex: none; display: flex; align-items: center; background: #2f2f2f; border: 1px solid #2a2a2a; border-radius: 5px; padding: 0 1px 0 5px; font-size: 11.700px; color: #ddd; }
.field span { flex: 1; }
.field .plus { margin-left: 3px; }
.fw1 { width: 101px; }
.fw2 { width: 100px; }
.minus { width: 14px; height: 14px; flex: none; background: linear-gradient(#eee, #eee) center / 100% 2px no-repeat; }
.plus { width: 14px; height: 14px; flex: none; background: linear-gradient(#eee, #eee) center / 100% 2px no-repeat, linear-gradient(#eee, #eee) center / 2px 100% no-repeat; }
.dim { opacity: .25; }
.lock { margin-left: 18px; }
.unit { width: 59px; height: 34px; margin-left: 7px; padding-left: 10px; gap: 2px; font-size: 11.700px; color: #ccc; }
.snaps { display: flex; gap: 6.500px; margin-left: 12px; flex: none; }
.bluebtn { width: 34px; height: 34px; background: #1d4a80; border: 1px solid #2a3a52; border-radius: 5px; display: flex; align-items: center; justify-content: center; }
.bluebtn svg { width: 24px; height: 24px; }
.snapmain { margin-left: 130px; }
.more { width: 35px; height: 34px; margin-left: 14px; justify-content: center; }

.main { flex: none; height: 618px; display: flex; background: #333; overflow: hidden; }

.tools { width: 28px; flex: none; border-right: 2px solid #2a2a2a; display: grid; grid-template-rows: 32px 32.500px 33.500px 33.500px 32.500px 31.500px 32px 34px 33.500px 32px 32px 33px 33px 32.500px 32px 33.500px 33.500px 31.500px 30px; justify-items: center; align-items: center; }
.tool { width: 22px; height: 22px; display: flex; align-items: center; justify-content: center; margin-left: -1px; }
.tool svg { width: 20px; height: 20px; }
.tool.on { background: #1c4a80; border-radius: 4px; height: 25px; margin-top: 4px; }
.tool-a { font-size: 18px; font-weight: 700; color: #eee; line-height: 1; }
.tool-bar { width: 2px; height: 15px; background: #1d7a3a; margin-left: 1px; }

.work { width: 965px; flex: none; display: grid; grid-template-columns: 22px 925px 18px; grid-template-rows: 21px 574px 23px; }
.corner { display: flex; align-items: center; justify-content: flex-end; padding-right: 2px; padding-top: 1px; }
.hruler {
  position: relative; display: flex; padding-left: 31px; overflow: hidden;
  background:
    repeating-linear-gradient(90deg, #ddd 0 1px, transparent 1px 46.700px) 31px 100% / 100% 7px no-repeat,
    repeating-linear-gradient(90deg, #ddd 0 1px, transparent 1px 9.340px) 3px 100% / 100% 3px no-repeat,
    linear-gradient(#1e1e1e, #1e1e1e) 405px 0 / 390px 100% no-repeat,
    #2d2d2d;
}
.hruler span { flex: none; width: 93.400px; height: 17px; border-left: 1px solid #ddd; padding-left: 2px; font-size: 9px; line-height: 14px; color: #bbb; }
.hmark { position: absolute; left: 405px; top: 10px; width: 48px; height: 10px; }
.hptr { position: absolute; left: 502px; top: 16px; width: 0; height: 0; border: 5px solid transparent; border-top: 5px solid #eee; border-bottom: 0; }
.rulercorner { display: flex; align-items: center; justify-content: center; }
.vruler {
  position: relative; display: flex; flex-direction: column; align-items: flex-start; padding-top: 8px; overflow: hidden; height: 570px;
  background:
    repeating-linear-gradient(0deg, #ddd 0 1px, transparent 1px 46.700px) 100% 0 / 9px 100% no-repeat,
    repeating-linear-gradient(0deg, #ddd 0 1px, transparent 1px 9.340px) 100% 0 / 4px 100% no-repeat,
    #1e1e1e;
}
.vruler span { flex: none; height: 93.400px; writing-mode: vertical-rl; transform: rotate(180deg); font-size: 9px; line-height: 20px; color: #ccc; width: 20px; text-align: left; padding-top: 70px; }
.vruler span:first-child { padding-top: 78px; }
.vmark { position: absolute; left: 11px; top: 520px; width: 10px; height: 48px; }
.vptr { position: absolute; right: 0; top: 476px; width: 0; height: 0; border: 5px solid transparent; border-left: 5px solid #eee; border-right: 0; }
.canvas { background: #d1d1d1; overflow: hidden; }
.vscroll { padding: 196px 0 0 6px; }
.vscroll i { width: 8px; height: 179px; background: #8e8e8e; border-radius: 4px; }
.hscroll { grid-column: 1 / 3; border-top: 5px solid #2a2a2a; padding: 2px 0 0 41px; }
.hscroll i { width: 664px; height: 8px; background: #8e8e8e; border-radius: 4px; }
.scorner { padding: 8px 0 0 8px; }
.scorner i { width: 4px; height: 4px; border-radius: 50%; background: #eee; }

.handle { width: 15px; flex: none; display: flex; flex-direction: column; align-items: center; justify-content: center; gap: 2px; padding: 0 0 10px 3px; }
.handle i { width: 3px; height: 3px; background: #ddd; border-radius: 50%; }

.panel { width: 307px; flex: none; padding-top: 5px; display: flex; flex-direction: column; }
.tabs { height: 37px; flex: none; display: flex; background: #2b2b2b; }
.tab-first { width: 73px; flex: none; display: flex; align-items: center; justify-content: center; padding: 0 16px 0 0; background: #2c2c2c; }
.tab-active { width: 138px; flex: none; display: flex; align-items: center; gap: 4px; padding: 3px 0 0 11px; background: #303030; border-bottom: 4px solid #1a56a5; font-size: 11.700px; color: #ddd; }
.tab-active svg:last-child { margin-left: 4px; }
.tab-menu { flex: 1; display: flex; align-items: center; justify-content: flex-end; padding: 0 9px 0 0; }
.fill-panel { height: 467px; flex: none; display: flex; flex-direction: column; background: #2d2d2d; border-bottom: 1px solid #232323; border-top: 1px solid #262626; }
.subtabs { height: 29px; flex: none; display: flex; align-items: center; font-size: 11.700px; color: #ccc; }
.subtab { display: flex; align-items: center; gap: 4px; height: 29px; }
.subtab:nth-child(2) { margin-left: 17px; }
.subtab:nth-child(3) { margin-left: 23px; }
.subtab.current { width: 50px; margin-left: 9px; padding-left: 9px; border-bottom: 3px solid #1a56a5; border-radius: 2px; }
.sq { width: 13px; height: 13px; border: 1.500px solid #eee; }
.sq.filled { background: #eee; }
.paints { height: 28px; flex: none; margin-top: 4px; display: flex; align-items: center; padding-left: 8px; }
.paint { width: 24px; height: 26px; margin-right: 4px; flex: none; display: flex; align-items: center; justify-content: center; border-radius: 4px; }
.paint.sel { background: #1a4f8f; }
.paint.rule { width: 25px; }
.r1 { margin-left: 15px; }
.paint.q { font-size: 17px; font-weight: 700; color: #eee; }
.swatch { width: 16px; height: 16px; }
.flat { background: #1296e8; }
.lin { background: linear-gradient(90deg, #1296e8, #e8f4fc); }
.rad { background: radial-gradient(#1296e8, #e8f4fc); }
.mesh { background: linear-gradient(135deg, #1296e8, #f0f8ff 55%, #1296e8); }
.pat { background: radial-gradient(circle, #eee 2.300px, #222 3px) 0 0 / 5.340px 5.340px; }
.sw { border: 2px solid #eee; background: #1296e8; box-shadow: inset 0 0 0 1px #222; }
.flatrow { height: 32px; margin-top: 9px; flex: none; display: flex; align-items: center; justify-content: space-between; padding: 0 8px; }
.flat-label { font-size: 11.700px; font-weight: 700; color: #ddd; }
.hsl { width: 95px; height: 32px; padding-left: 11px; gap: 5px; font-size: 12px; color: #ddd; }
.hsl .caret { margin-left: 9px; }
.rainbow { width: 17px; height: 12px; background: linear-gradient(90deg, #f00, #ff0, #0f0, #0ff, #00f, #f0f, #f00); }
.wheelrow { height: 30px; flex: none; display: flex; align-items: center; padding-left: 16px; font-size: 11.700px; color: #bbb; }
.tri { width: 0; height: 0; border: 5px solid transparent; border-left: 6px solid #eee; border-right: 0; margin-right: 9px; }
.wheel { width: 16px; height: 16px; border-radius: 50%; background: radial-gradient(#2d2d2d 35%, transparent 38%), conic-gradient(#f00, #ff0, #0f0, #0ff, #00f, #f0f, #f00); margin-right: 6px; }
.sl { height: 34px; margin-bottom: 4px; flex: none; display: flex; align-items: center; padding-left: 12px; }
.sl label { width: 16px; font-size: 11.700px; color: #bbb; }
.track { position: relative; width: 193px; height: 34px; flex: none; }
.hue { background: linear-gradient(90deg, #f00, #ff0 17%, #0f0 33%, #0ff 50%, #00f 67%, #f0f 83%, #f00); }
.sat { background: linear-gradient(90deg, #808080, #ff00ff); }
.lig { background: linear-gradient(90deg, #000, #ff00ff 50%, #fff); }
.alp { background: linear-gradient(90deg, rgba(255,0,255,0), #ff00ff), repeating-conic-gradient(#999 0 25%, #666 0 50%) 0 0 / 16px 16px; }
.mk { position: absolute; width: 0; height: 0; border: 4px solid transparent; }
.mk.top { top: 0; border-top: 4px solid #fff; border-bottom: 0; }
.mk.bot { bottom: 0; border-bottom: 4px solid #fff; border-top: 0; }
.mh { left: 156px; }
.ml { left: 92px; }
.mend { right: -3px; }
.sfield { width: 72px; height: 34px; margin-left: 4px; flex: none; display: flex; align-items: center; padding: 0 3px 0 6px; font-size: 11.700px; color: #ddd; background: #2f2f2f; border: 1px solid #2a2a2a; border-radius: 4px; }
.sfield span { flex: 1; }
.sfield .plus { margin-left: 3px; }
.colorfoot { margin-top: auto; margin-bottom: 2px; height: 38px; flex: none; display: flex; align-items: center; padding-left: 7px; }
.cf2 { margin-left: 2px; }
.cf3 { margin-left: 13px; }
.rgba-l { margin-left: 122px; font-size: 11.700px; color: #bbb; }
.rgba { width: 65px; height: 32px; margin-left: 4px; padding-left: 8px; display: flex; align-items: center; font-size: 11.700px; color: #ddd; background: #2f2f2f; border: 1px solid #272727; border-radius: 4px; }
.blend { height: 32px; margin-top: 4px; flex: none; display: flex; align-items: center; justify-content: flex-end; padding-right: 4px; font-size: 11.700px; color: #ddd; gap: 5px; }
.normal { width: 104px; height: 32px; padding: 0 10px 0 11px; justify-content: space-between; font-size: 11.700px; }
.bar { height: 25px; margin: 5px 5px 1px 6px; flex: none; display: flex; align-items: center; background: #2d2d2d; border-radius: 3px; }
.track-b { width: 224px; height: 25px; background: #262626; display: flex; align-items: center; padding-left: 4px; font-size: 11.700px; color: #ddd; flex: none; }
.track-b.blue { background: #1a56a5; color: #eee; border: 1px solid #16335c; }
.bar b { font-weight: 400; width: 40px; padding-left: 6px; font-size: 11.700px; color: #ddd; }
.bar .plus { margin-left: 3px; margin-right: 2px; }
.bar .minus { margin-left: auto; width: 12px; }

.cmds { flex: 1; padding: 5px 0 0 2px; display: grid; grid-template-rows: 36px 36.500px 36.500px 38.500px 39px 39px 39.500px 39px 38.500px 37.500px 39.500px 38.500px 36.500px 37px 39px 41px; justify-items: center; align-items: center; }
.cmd { display: flex; align-items: center; justify-content: center; }
.cmd svg { width: 19px; height: 19px; }
.cmore { width: 35px; height: 32px; justify-content: center; }

.palette { height: 20px; flex: none; display: flex; background: #333; }
.none { width: 34px; height: 20px; padding: 1px 0 0 2px; flex: none; }
.none svg { background: #fff; }
.c { display: block; height: 20px; flex: 1; background-clip: padding-box; border-bottom: 3px solid #6d5a3a; border-right: 1px solid #333; }
.c.big { flex: none; width: 34px; border: 0; }
.pgroup { display: flex; flex: none; }
.g1 { width: 743px; }
.g2 { width: 420px; }
.pctrl { display: flex; align-items: flex-end; gap: 11px; padding: 0 0 0 5px; flex: 1; }
.c000 { background: #000; } .c808 { background: #808080; } .cfff { background: #fff; }
.g01 { background-color: #1a1a1a; border-bottom-color: #c86a20; } .g02 { background-color: #303030; border-bottom-color: #e07020; } .g03 { background-color: #4d4d4d; border-bottom-color: #e89050; } .g04 { background-color: #666; border-bottom-color: #e8a070; } .g05 { background-color: #999; border-bottom-color: #e8c0a0; } .g06 { background-color: #b3b3b3; border-bottom-color: #e8d0c0; } .g07 { background-color: #ccc; border-bottom-color: #fff; } .g08 { background-color: #e6e6e6; border-bottom-color: #222; } .g09 { background-color: #ececec; border-bottom-color: #555; } .g10 { background-color: #f2f2f2; border-bottom-color: #555; } .g11 { background-color: #f9f9f9; border-bottom-color: #555; }
.b01 { background-color: #800000; border-bottom-color: #c8685a; } .b02 { background-color: #f00; border-bottom-color: #e87050; } .b03 { background-color: #808000; border-bottom-color: #d8b080; } .b04 { background-color: #ff0; border-bottom-color: #e8d8a0; } .b05 { background-color: #008000; border-bottom-color: #fff; } .b06 { background-color: #0f0; border-bottom-color: #eee; } .b07 { background-color: #008080; border-bottom-color: #eee; } .b08 { background-color: #0ff; border-bottom-color: #eee; } .b09 { background-color: #000080; border-bottom-color: #aaa; } .b10 { background-color: #00f; border-bottom-color: #bbb; } .b11 { background-color: #800080; border-bottom-color: #ccc; }
.b12 { background: radial-gradient(circle, #ff00ff 1.500px, #ffc0ff 2.200px 2.800px, #ff00ff 3.500px 4.500px, #ffc0ff 5px 5.500px, #ff00ff 6px) padding-box; border-bottom-color: #fff; }
.r01 { background-color: #2b0000; } .r02 { background-color: #500; } .r03 { background-color: #800000; } .r04 { background-color: #a00; } .r05 { background-color: #d40000; } .r06 { background-color: #f00; border-bottom-color: #e0b010; } .r07 { background-color: #ff2a2a; border-bottom-color: #f0c020; } .r08 { background-color: #f55; } .r09 { background-color: #ff8080; } .r10 { background-color: #faa; } .r11 { background-color: #ffd5d5; border-bottom-color: #fff; }
.p01 { background-color: #280b0b; } .p02 { background-color: #501616; } .p03 { background-color: #782121; } .p04 { background-color: #a02c2c; } .p05 { background-color: #c83737; } .p06 { background-color: #d35f5f; } .p07 { background-color: #de8787; } .p08 { background-color: #e9afaf; } .p09 { background-color: #f4d7d7; border-bottom-color: #fff; }
.m01 { background-color: #241c1c; } .m02 { background-color: #483737; } .m03 { background-color: #6c5353; } .m04 { background-color: #916f6f; } .m05 { background-color: #ac9393; } .m06 { background-color: #c8b7b7; } .m07 { background-color: #e3dbdb; }
.o01 { background-color: #2b1100; } .o02 { background-color: #552200; } .o03 { background-color: #803300; border-bottom-color: #8a7a10; } .o04 { background-color: #a40; border-bottom-color: #a09010; }

.taskbar { height: 40px; flex: none; display: flex; align-items: center; background: #584610; color: #eee; }
.start { width: 48px; flex: none; display: flex; justify-content: center; padding-right: 2px; }
.search { width: 288px; height: 39px; flex: none; margin-top: 1px; background: #6f5c32; border: 1px solid #7d6b42; display: flex; align-items: center; padding-left: 11px; font-size: 15px; color: #e6e0d0; position: relative; }
.search span { margin-left: 9px; }
.dolls { position: absolute; left: 228px; top: -1px; }
.ti { position: relative; width: 43px; height: 40px; flex: none; display: flex; align-items: center; justify-content: center; }
.taskview { margin-left: 2.500px; }
.tdiv { width: 25px; flex: none; display: flex; justify-content: center; gap: 2px; }
.tdiv i { width: 1px; height: 22px; background: #7a6838; }
.run { border-bottom: 2px solid #ffedc4; padding-top: 2px; }
.cur { background: #8a6f28; border-bottom: 2px solid #ffedc4; padding-top: 2px; }
.chrome { position: relative; width: 24px; height: 24px; border-radius: 50%; background: conic-gradient(#e8453c 0 33%, #f9bc15 33% 66%, #34a853 66% 100%); }
.chrome i { position: absolute; left: 6px; top: 6px; width: 12px; height: 12px; border-radius: 50%; background: #3b82e0; border: 2px solid #fff; }
.chrome-badge { position: absolute; left: 26px; top: 23px; width: 11px; height: 11px; border-radius: 50%; background: #222; }
.cdoll { position: absolute; left: 20px; top: 19px; }
.wabadge { position: absolute; left: 18px; top: 17px; width: 19px; height: 19px; border-radius: 50%; background: #6a5a2e; border: 1px solid #c8c090; font-size: 12px; line-height: 17px; text-align: center; color: #eee; }
.help { width: 46px; margin-left: 2px; flex: none; display: flex; justify-content: center; }
.helpq { font: 700 14px "Liberation Sans", sans-serif; fill: #fff; }
.tray { flex: none; display: flex; justify-content: center; }
.chev { width: 20px; margin-left: -5px; }
.wifi { width: 30px; }
.batt { width: 16px; }
.lang { width: 40px; flex: none; text-align: center; margin-left: .500px; font-size: 12px; white-space: nowrap; }
.clock { width: 60px; flex: none; margin-left: 4px; display: flex; flex-direction: column; align-items: center; gap: 2px; font-size: 11.700px; line-height: 16px; white-space: nowrap; }
.notif { margin-left: 16px; flex: none; }
```
